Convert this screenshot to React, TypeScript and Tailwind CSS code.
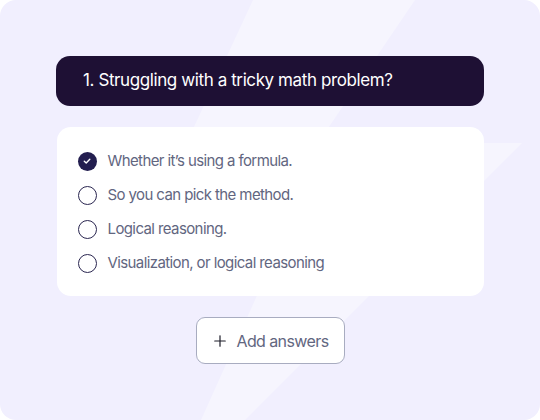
import { Plus } from 'lucide-react';

const answers = [
  { text: 'Whether it\u2019s using a formula.', checked: true },
  { text: 'So you can pick the method.', checked: false },
  { text: 'Logical reasoning.', checked: false },
  { text: 'Visualization, or logical reasoning', checked: false },
];

function Radio({ checked }: { checked: boolean }) {
  if (checked) {
    return (
      <span className="flex h-[19px] w-[19px] shrink-0 items-center justify-center rounded-full bg-[#231e4f]">
        <svg width="10" height="10" viewBox="0 0 10 10" fill="none">
          <path d="M2.3 5.2 4.2 7 7.8 3.2" stroke="white" strokeWidth="1.4" strokeLinecap="round" strokeLinejoin="round" />
        </svg>
      </span>
    );
  }
  return <span className="h-[19px] w-[19px] shrink-0 rounded-full border-[1.5px] border-[#2a2650]" />;
}

export default function App() {
  return (
    <div className="w-[540px] h-[420px] bg-white" style={{ fontFamily: 'Inter, "Noto Sans", sans-serif' }}>
      <div className="relative h-full w-full overflow-hidden rounded-[16px] bg-[#f1effe]">
        {/* background bolt */}
        <svg className="absolute inset-0" width="540" height="420" viewBox="0 0 540 420">
          <polygon
            points="253,0 415,0 318,143 522,143 245,420 201,420 300,200 160,200"
            fill="#f6f5fe"
          />
        </svg>

        <div className="relative flex flex-col items-center px-[56px] pt-[56px]">
          {/* Question */}
          <div className="flex h-[50px] w-full items-center rounded-[14px] bg-[#1e1034] pl-[27px]">
            <span className="text-[17px] tracking-[-0.4px] text-white">1. Struggling with a tricky math problem?</span>
          </div>

          {/* Answers */}
          <div className="mt-[21px] flex w-[427px] flex-col gap-[14px] rounded-[14px] bg-white pl-[21px] pt-[24px] pb-[23px]">
            {answers.map((a) => (
              <div key={a.text} className="flex h-[20px] items-center gap-[11px]">
                <Radio checked={a.checked} />
                <span className="text-[15px] tracking-[-0.6px] text-[#62667f]">{a.text}</span>
              </div>
            ))}
          </div>

          {/* Add */}
          <button className="mt-[21px] flex h-[47px] w-[149px] items-center justify-center gap-[7px] rounded-[9px] border border-[#a8acc0] bg-white">
            <Plus size={18} strokeWidth={1.6} className="text-[#1c1c28]" />
            <span className="text-[16px] tracking-[-0.6px] text-[#62667f]">Add answers</span>
          </button>
        </div>
      </div>
    </div>
  );
}
